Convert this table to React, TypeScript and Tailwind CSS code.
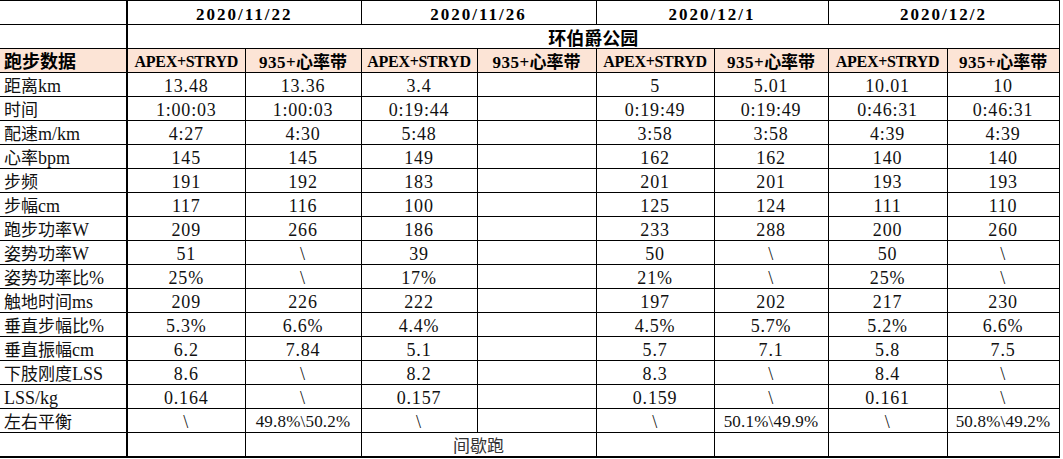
import React from "react";

type Row = { label: string; values: string[] };

const rows: Row[] = [
  { label: "距离km", values: ["13.48", "13.36", "3.4", "", "5", "5.01", "10.01", "10"] },
  { label: "时间", values: ["1:00:03", "1:00:03", "0:19:44", "", "0:19:49", "0:19:49", "0:46:31", "0:46:31"] },
  { label: "配速m/km", values: ["4:27", "4:30", "5:48", "", "3:58", "3:58", "4:39", "4:39"] },
  { label: "心率bpm", values: ["145", "145", "149", "", "162", "162", "140", "140"] },
  { label: "步频", values: ["191", "192", "183", "", "201", "201", "193", "193"] },
  { label: "步幅cm", values: ["117", "116", "100", "", "125", "124", "111", "110"] },
  { label: "跑步功率W", values: ["209", "266", "186", "", "233", "288", "200", "260"] },
  { label: "姿势功率W", values: ["51", "\\", "39", "", "50", "\\", "50", "\\"] },
  { label: "姿势功率比%", values: ["25%", "\\", "17%", "", "21%", "\\", "25%", "\\"] },
  { label: "触地时间ms", values: ["209", "226", "222", "", "197", "202", "217", "230"] },
  { label: "垂直步幅比%", values: ["5.3%", "6.6%", "4.4%", "", "4.5%", "5.7%", "5.2%", "6.6%"] },
  { label: "垂直振幅cm", values: ["6.2", "7.84", "5.1", "", "5.7", "7.1", "5.8", "7.5"] },
  { label: "下肢刚度LSS", values: ["8.6", "\\", "8.2", "", "8.3", "\\", "8.4", "\\"] },
  { label: "LSS/kg", values: ["0.164", "\\", "0.157", "", "0.159", "\\", "0.161", "\\"] },
  { label: "左右平衡", values: ["\\", "49.8%\\50.2%", "\\", "", "\\", "50.1%\\49.9%", "\\", "50.8%\\49.2%"] },
];

const dates = ["2020/11/22", "2020/11/26", "2020/12/1", "2020/12/2"];
const widths = [127, 118, 116, 116, 119, 118, 114, 119, 112];

// CJK runs fall back to Noto Sans CJK; latin stays in the serif
function T({ s }: { s: string }) {
  const parts = s.split(/([\u4e00-\u9fff]+)/).filter(Boolean);
  return (
    <>
      {parts.map((p, i) =>
        /[\u4e00-\u9fff]/.test(p) ? (
          <span key={i} className="font-['Noto_Sans_CJK_SC',sans-serif] text-[17px] tracking-normal">
            {p}
          </span>
        ) : (
          <span key={i}>{p}</span>
        )
      )}
    </>
  );
}

const cell = "border border-black h-[24px] p-0 text-center align-middle";
const first = "border border-black border-l-0 border-r-2 h-[24px] p-0 align-middle";

export default function App() {
  return (
    <div className="w-[1063px] h-[459px] bg-white overflow-hidden">
      <table className="table-fixed border-collapse w-[1059px] text-[#111] text-[17px] leading-none font-['Liberation_Serif','Noto_Sans_CJK_SC',serif]">
        <colgroup>
          {widths.map((w, i) => (
            <col key={i} style={{ width: w }} />
          ))}
        </colgroup>
        <tbody>
          <tr>
            <td className={first} />
            {dates.map((d) => (
              <td key={d} colSpan={2} className={`${cell} pt-[3px] font-bold text-black tracking-[2px]`}>
                {d}
              </td>
            ))}
          </tr>
          <tr>
            <td className={first} />
            <td colSpan={8} className={`${cell} pt-[2px] font-bold text-black`}>
              <span className="font-['Noto_Sans_CJK_SC',sans-serif] text-[18px]">环伯爵公园</span>
            </td>
          </tr>
          <tr className="bg-[#fce4d6]">
            <td className={`${first} text-left pl-[4px] font-bold text-black`}>
              <span className="font-['Noto_Sans_CJK_SC',sans-serif] text-[18px]">跑步数据</span>
            </td>
            {[0, 1, 2, 3].map((i) => (
              <React.Fragment key={i}>
                <td className={`${cell} pt-[2px] font-bold text-black text-[16px] tracking-[-0.3px]`}>APEX+STRYD</td>
                <td className={`${cell} pt-[2px] font-bold text-black text-[17px] tracking-[0.5px]`}>
                  <T s="935+心率带" />
                </td>
              </React.Fragment>
            ))}
          </tr>
          {rows.map((r) => (
            <tr key={r.label}>
              <td className={`${first} text-left pl-[4px] pt-[2px] whitespace-nowrap text-[18px]`}>
                <T s={r.label} />
              </td>
              {r.values.map((v, i) =>
                v.length > 8 ? (
                  <td key={i} className={`${cell} pt-[2px] whitespace-nowrap text-[17px] tracking-[0.2px]`}>
                    {v}
                  </td>
                ) : (
                  <td key={i} className={`${cell} pt-[2px] whitespace-nowrap text-[18px] tracking-[0.8px]`}>
                    {v}
                  </td>
                )
              )}
            </tr>
          ))}
          <tr>
            <td className={`${first} border-b-2`} />
            <td className={`${cell} border-b-2`} />
            <td className={`${cell} border-b-2`} />
            <td colSpan={2} className={`${cell} border-b-2 pt-[2px] text-[#333]`}>
              <T s="间歇跑" />
            </td>
            <td className={`${cell} border-b-2`} />
            <td className={`${cell} border-b-2`} />
            <td className={`${cell} border-b-2`} />
            <td className={`${cell} border-b-2`} />
          </tr>
        </tbody>
      </table>
    </div>
  );
}
